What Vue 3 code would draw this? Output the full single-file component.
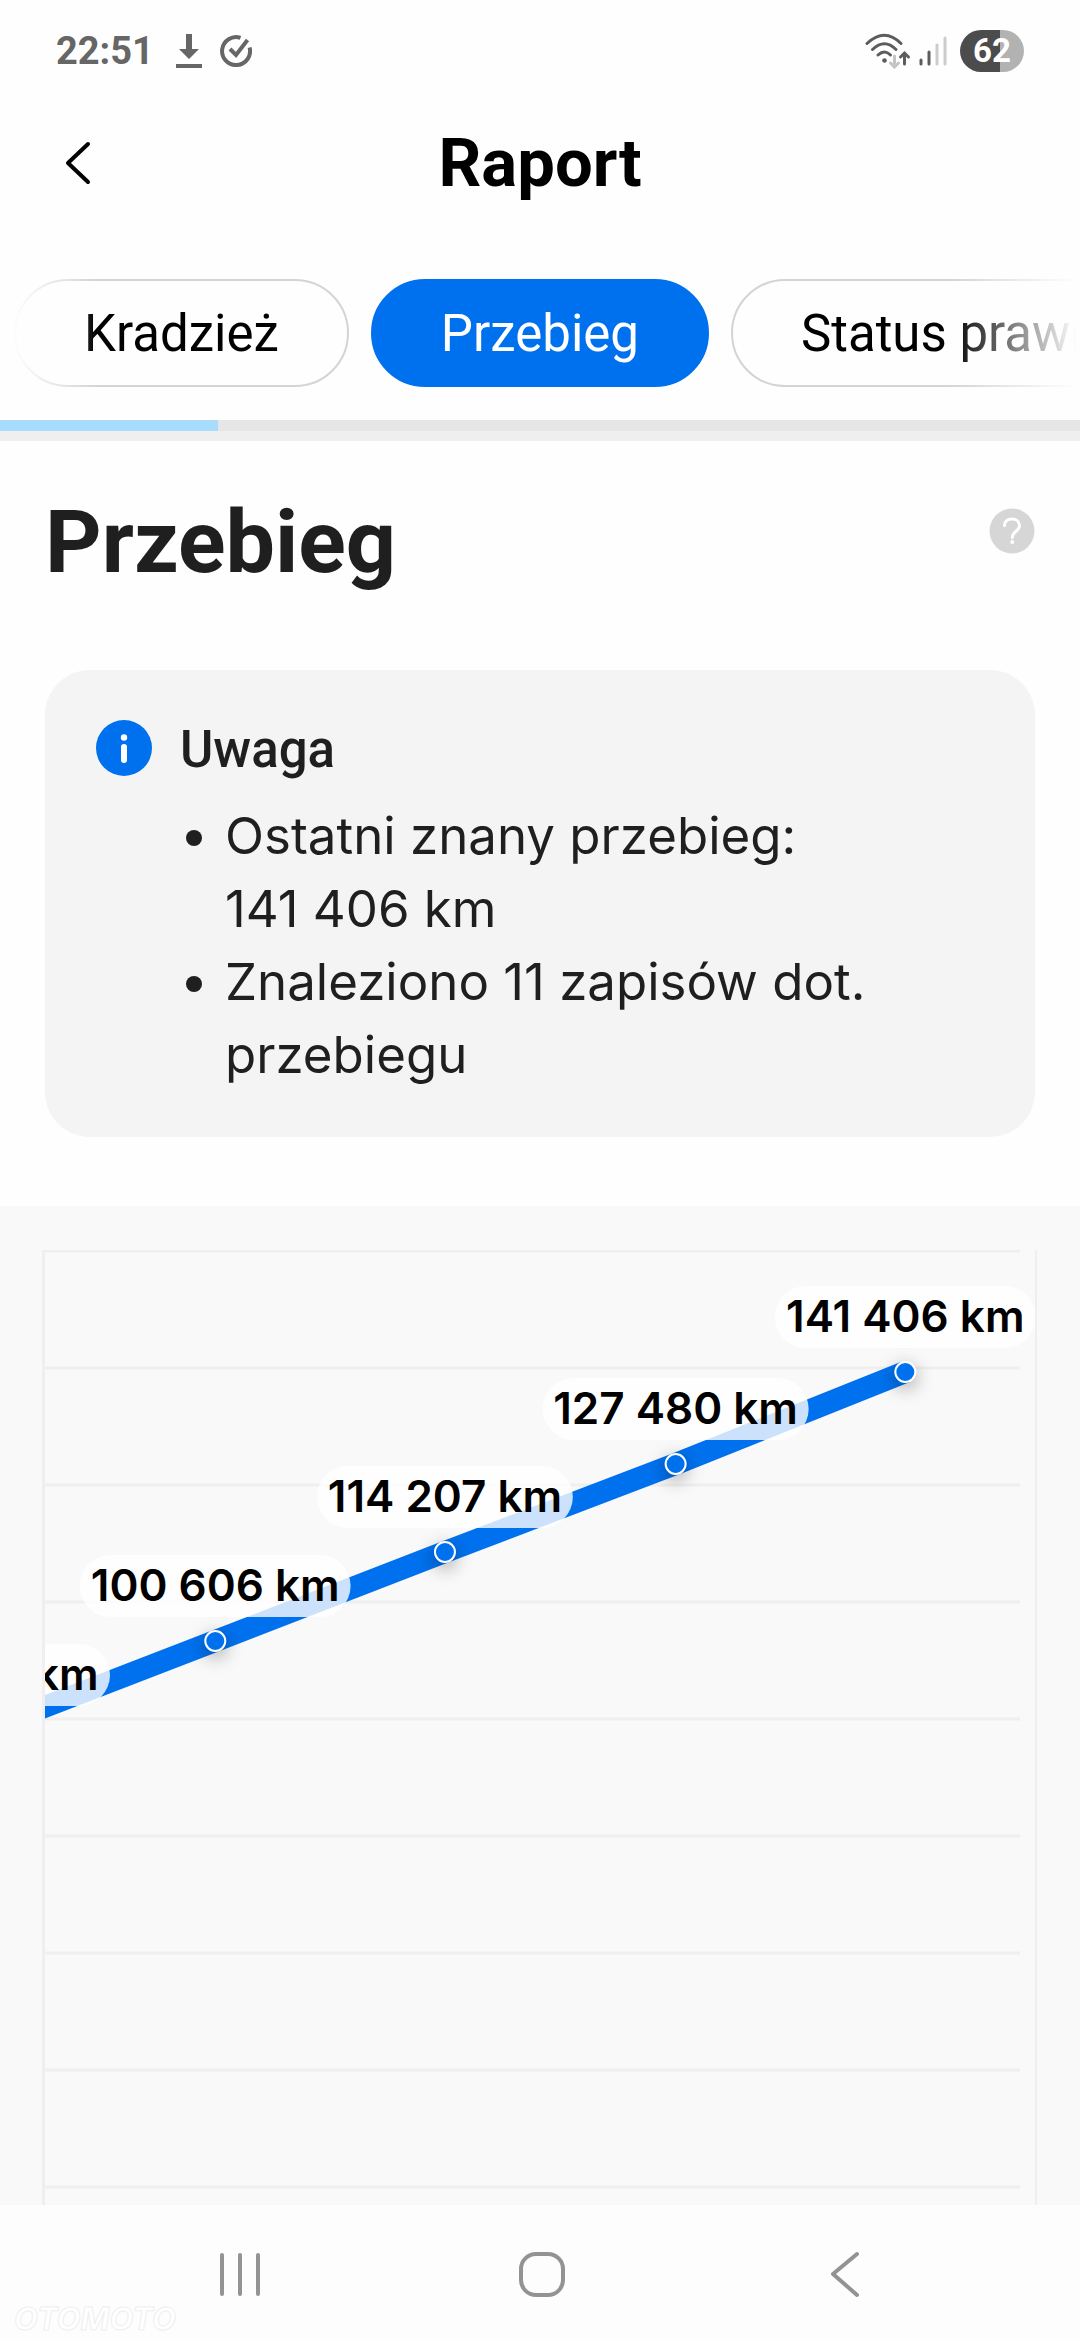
<script setup>
import { ref } from 'vue'

const tabs = ['Kradzież', 'Przebieg', 'Status prawny']
const active = ref('Przebieg')

const notes = [
  'Ostatni znany przebieg: 141\u00a0406\u00a0km',
  'Znaleziono 11 zapisów dot. przebiegu',
]

// x is a share of the plot width, y is in pixels from the plot's top
const points = [
  { x: -6.1, y: 480, label: 'km', cut: true },
  { x: 17.2, y: 391, label: '100\u00a0606\u00a0km' },
  { x: 40.4, y: 302, label: '114\u00a0207\u00a0km' },
  { x: 63.7, y: 214, label: '127\u00a0480\u00a0km' },
  { x: 86.9, y: 122, label: '141\u00a0406\u00a0km' },
]
const segments = points.slice(1).map((to, i) => ({ from: points[i], to }))
const gridLines = Array.from({ length: 9 }, (_, i) => 1 + i * 117)
</script>

<template>
  <div class="screen">
    <div class="status">
      <div class="status-side">
        <span class="clock">22:51</span>
        <svg class="download" width="26" height="34" viewBox="0 0 26 34">
          <path d="M10 0h6v15h7L13 25 3 15h7zM0 30h26v4H0z" fill="#666" />
        </svg>
        <svg width="32" height="32" viewBox="0 0 32 32" fill="none" stroke="#666" stroke-width="4">
          <path d="M20.500 2.800A14 14 0 1 0 29.600 12.500" />
          <path d="M10 14l6 6L27.500 5" />
        </svg>
      </div>
      <div class="status-side">
        <svg width="46" height="36" viewBox="0 0 46 36" fill="none" stroke-linecap="round" stroke-width="3">
          <g stroke="#5c5c5c">
            <path d="M2 10.500Q19.500-6 36 10.500" />
            <path d="M7.500 16.500Q19.500 5 31 16.500" />
            <path d="M13 22Q19.500 16 25.500 22" />
            <path d="M39.500 31V21M35.500 24l4-4 4 4" />
          </g>
          <circle cx="19.500" cy="27.500" r="2.300" fill="#5c5c5c" />
          <path d="M29.500 23v10M25.500 30l4 4 4-4" stroke="#c4c4c4" />
        </svg>
        <svg class="signal" width="28" height="30" viewBox="0 0 28 30" stroke-linecap="round" stroke-width="3">
          <path d="M2 28v-4M10 28V16" stroke="#5c5c5c" />
          <path d="M18 28V9M26 28V2" stroke="#ccc" />
        </svg>
        <span class="battery">62</span>
      </div>
    </div>

    <header class="header">
      <button class="back" type="button" aria-label="Wstecz">
        <svg width="28" height="44" viewBox="0 0 28 44" fill="none" stroke="#000" stroke-width="4" stroke-linecap="round" stroke-linejoin="round">
          <path d="M24 3L4 22l20 19" />
        </svg>
      </button>
      <h1>Raport</h1>
    </header>

    <nav class="tabs">
      <button
        v-for="tab in tabs"
        :key="tab"
        type="button"
        class="tab"
        :class="{ active: tab === active }"
        @click="active = tab"
      >{{ tab }}</button>
    </nav>
    <div class="progress"><div class="bar"></div></div>

    <main>
      <div class="heading">
        <h2>Przebieg</h2>
        <button class="help" type="button" aria-label="Pomoc">
          <svg width="46" height="46" viewBox="0 0 46 46" fill="none">
            <circle cx="23" cy="23" r="22.500" fill="#d6d6d6" />
            <path d="M15.500 17.500c0-4 3.200-6.500 7.500-6.500s7.500 2.600 7.500 6.800c0 5.200-7.200 5.700-7.200 11.700" stroke="#fff" stroke-width="3" stroke-linecap="round" />
            <circle cx="23.200" cy="34" r="2" fill="#fff" />
          </svg>
        </button>
      </div>

      <section class="notice">
        <svg class="info" width="56" height="56" viewBox="0 0 56 56">
          <circle cx="28" cy="28" r="28" fill="#0071ee" />
          <circle cx="28" cy="17.500" r="3.200" fill="#fff" />
          <path d="M28 27v13" stroke="#fff" stroke-width="6" stroke-linecap="round" />
        </svg>
        <div>
          <h3>Uwaga</h3>
          <ul>
            <li v-for="note in notes" :key="note"><span>{{ note }}</span></li>
          </ul>
        </div>
      </section>
    </main>

    <section class="chart">
      <div class="plot">
        <svg class="canvas">
          <line v-for="y in gridLines" :key="y" class="grid" x1="0" x2="98.5%" :y1="y" :y2="y" />
          <line
            v-for="(s, i) in segments"
            :key="i"
            class="trend"
            :x1="s.from.x + '%'"
            :y1="s.from.y"
            :x2="s.to.x + '%'"
            :y2="s.to.y"
          />
          <circle v-for="p in points" :key="p.x" class="marker" :cx="p.x + '%'" :cy="p.y" r="10" />
        </svg>
        <span
          v-for="p in points"
          :key="p.x"
          class="label"
          :class="{ cut: p.cut }"
          :style="{ left: p.x + '%', top: p.y + 'px' }"
        >{{ p.label }}</span>
      </div>
    </section>

    <footer class="system-nav">
      <button type="button" aria-label="Ostatnie">
        <svg width="56" height="56" viewBox="0 0 56 56" stroke="#939393" stroke-width="4" stroke-linecap="round">
          <path d="M10 10v39M28 10v39M46 10v39" />
        </svg>
      </button>
      <button type="button" aria-label="Ekran główny">
        <svg width="56" height="56" viewBox="0 0 56 56" fill="none" stroke="#939393" stroke-width="4">
          <rect x="9" y="9" width="42" height="41" rx="15" />
        </svg>
      </button>
      <button type="button" aria-label="Cofnij">
        <svg width="56" height="56" viewBox="0 0 56 56" fill="none" stroke="#939393" stroke-width="4" stroke-linecap="round" stroke-linejoin="round">
          <path d="M45 9L21 29l24 21" />
        </svg>
      </button>
      <span class="watermark">OTOMOTO</span>
    </footer>
  </div>
</template>

<style>
body {
  margin: 0;
  background: #fdfdfd;
}
</style>

<style scoped>
.screen {
  display: flex;
  flex-direction: column;
  min-height: 100vh;
  overflow: hidden;
  background: #fefefe;
  color: #1f1f1f;
  font-family: Roboto, "Liberation Sans", sans-serif;
}
button {
  padding: 0;
  border: 0;
  background: none;
  font: inherit;
  cursor: pointer;
}
svg {
  display: block;
}
h1,
h2,
h3,
ul {
  margin: 0;
  padding: 0;
}

.status {
  display: flex;
  justify-content: space-between;
  align-items: center;
  height: 102px;
  padding: 0 56px;
}
.status-side {
  display: flex;
  align-items: center;
}
.clock {
  margin-right: 22px;
  color: #666;
  font-size: 38px;
  font-weight: 700;
}
.download {
  margin-right: 18px;
}
.signal {
  margin: 0 13px 0 8px;
}
.battery {
  width: 64px;
  border-radius: 21px;
  background: linear-gradient(90deg, #4c4c4c 62%, #b2b2b2 62%);
  color: #fff;
  font-size: 33px;
  font-weight: 700;
  line-height: 42px;
  text-align: center;
}

.header {
  display: grid;
  grid-template-columns: 1fr auto 1fr;
  align-items: center;
  height: 122px;
  padding: 0 64px;
}
.back {
  justify-self: start;
}
h1 {
  color: #000;
  font-size: 67px;
  font-weight: 700;
}

.tabs {
  display: flex;
  gap: 22px;
  padding: 55px 0 33px 14px;
  overflow: hidden;
  mask-image: linear-gradient(90deg, transparent 12px, #000 96px, #000 calc(100% - 130px), transparent calc(100% - 4px));
}
.tab {
  flex: none;
  box-sizing: border-box;
  height: 108px;
  padding: 0 68px;
  border: 2px solid #d4d4d4;
  border-radius: 54px;
  color: #000;
  font-size: 51px;
}
.tab.active {
  border-color: #0071ee;
  background: #0071ee;
  color: #fff;
}
.progress {
  height: 11px;
  border-bottom: 10px solid #efefef;
  background: #e6e6e6;
}
.bar {
  width: 20.2%;
  height: 100%;
  background: #a8dcfd;
}

main {
  padding: 49px 45px 69px;
}
.heading {
  display: flex;
  justify-content: space-between;
  align-items: flex-start;
  margin-bottom: 76px;
}
h2 {
  font-size: 88px;
  font-weight: 700;
  line-height: 104px;
}
.help {
  margin-top: 18px;
}
.notice {
  display: flex;
  gap: 28px;
  padding: 50px 51px 46px;
  border-radius: 45px;
  background: #f4f4f4;
}
.info {
  flex: none;
}
h3 {
  margin-bottom: 19px;
  font-size: 51px;
  font-weight: 500;
  line-height: 60px;
}
ul {
  list-style: none;
  font-family: Inter, "Liberation Sans", sans-serif;
  font-size: 51px;
  line-height: 73px;
}
li {
  display: flex;
}
li::before {
  content: "";
  flex: none;
  width: 16px;
  height: 16px;
  margin: 31px 23px 0 6px;
  border-radius: 50%;
  background: #1f1f1f;
}

.chart {
  flex: 1;
  display: flex;
  padding: 44px 43px 0 42px;
  background: #f9f9f9;
}
.plot {
  position: relative;
  flex: 1;
  border: solid #efefef;
  border-width: 0 2px 0 3px;
  overflow: hidden;
}
.canvas {
  width: 100%;
  height: 955px;
}
.grid {
  stroke: #efefef;
  stroke-width: 3px;
}
.trend {
  stroke: #0071ee;
  stroke-width: 22px;
}
.marker {
  fill: #0071ee;
  stroke: #fff;
  stroke-width: 2px;
  filter: drop-shadow(0 5px 9px rgba(0, 0, 0, 0.35));
}
.label {
  position: absolute;
  margin-top: -86px;
  padding: 0 11px 2px;
  border-radius: 31px;
  background: rgba(255, 255, 255, 0.8);
  color: #000;
  font-family: Inter, "Liberation Sans", sans-serif;
  font-size: 44px;
  font-weight: 600;
  line-height: 60px;
  white-space: nowrap;
  transform: translateX(-50%);
}
.label.cut {
  box-sizing: border-box;
  width: 250px;
  text-align: right;
}

.system-nav {
  position: relative;
  display: flex;
  justify-content: space-between;
  align-items: center;
  height: 135px;
  padding: 0 212px;
  background: #fdfdfd;
}
.watermark {
  position: absolute;
  bottom: 3px;
  left: 14px;
  color: #fff;
  font-family: Inter, "Liberation Sans", sans-serif;
  font-size: 31px;
  font-style: italic;
  font-weight: 700;
  -webkit-text-stroke: 1px #efefef;
}
</style>
